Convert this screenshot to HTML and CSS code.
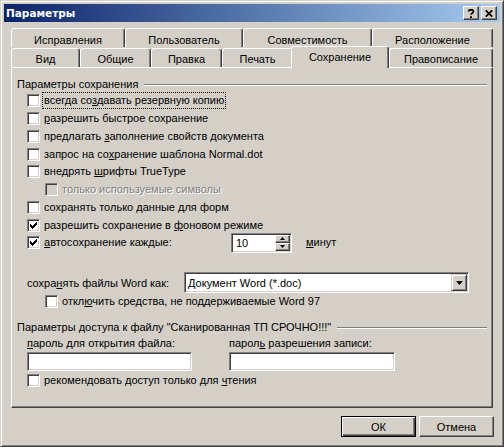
FILE: index.html
```html
<!DOCTYPE html>
<html lang="ru">
<head>
<meta charset="utf-8">
<title>Параметры</title>
<link rel="stylesheet" href="styles.css">
</head>
<body>
<div class="window">
  <div class="titlebar">
    <span class="title">Параметры</span>
    <div class="capbtns">
      <div class="cbtn"><svg width="8" height="9" viewBox="0 0 8 9"><path d="M1.6 2.6 Q1.6 0.8 4 0.8 Q6.4 0.8 6.4 2.5 Q6.4 3.7 4.9 4.3 Q4 4.7 4 5.8" fill="none" stroke="#000" stroke-width="1.8"/><rect x="3.1" y="7.2" width="1.9" height="1.8" fill="#000"/></svg></div>
      <div class="cbtn"><svg width="8" height="7" viewBox="0 0 8 7"><path d="M0.8 0.3 L7.2 6.7 M7.2 0.3 L0.8 6.7" stroke="#000" stroke-width="1.7"/></svg></div>
    </div>
  </div>

  <div class="tabs">
    <div class="tabrow back">
      <div class="tab w114">Исправления</div>
      <div class="tab w118">Пользователь</div>
      <div class="tab w129">Совместимость</div>
      <div class="tab w121">Расположение</div>
    </div>
    <div class="tabrow front">
      <div class="tab w69">Вид</div>
      <div class="tab w71">Общие</div>
      <div class="tab w71">Правка</div>
      <div class="tab w71">Печать</div>
      <div class="tab sel">Сохранение</div>
      <div class="tab w104">Правописание</div>
    </div>
  </div>

  <div class="panel">
    <div class="ghead"><span>Параметры сохранения</span><div class="gline"></div></div>

    <div class="row"><span class="cb"></span><span class="lbl focus">всегда со<u>з</u>давать резервную копию</span></div>
    <div class="row"><span class="cb"></span><span class="lbl"><u>р</u>азрешить быстрое сохранение</span></div>
    <div class="row"><span class="cb"></span><span class="lbl">предлагать <u>з</u>аполнение свойств документа</span></div>
    <div class="row"><span class="cb"></span><span class="lbl">запрос на со<u>х</u>ранение шаблона Normal.dot</span></div>
    <div class="row"><span class="cb"></span><span class="lbl">внедрять <u>ш</u>рифты TrueType</span></div>
    <div class="row sub"><span class="cb dis"></span><span class="lbl distext">только используемые символы</span></div>
    <div class="row"><span class="cb"></span><span class="lbl">сохранять только <u>д</u>анные для форм</span></div>
    <div class="row"><span class="cb"><svg class="chk" width="7" height="7" viewBox="0 0 7 7"><rect x="0" y="2" width="1" height="3"/><rect x="1" y="3" width="1" height="3"/><rect x="2" y="4" width="1" height="3"/><rect x="3" y="3" width="1" height="3"/><rect x="4" y="2" width="1" height="3"/><rect x="5" y="1" width="1" height="3"/><rect x="6" y="0" width="1" height="3"/></svg></span><span class="lbl">разрешить сохранение в <u>ф</u>оновом режиме</span></div>
    <div class="row"><span class="cb"><svg class="chk" width="7" height="7" viewBox="0 0 7 7"><rect x="0" y="2" width="1" height="3"/><rect x="1" y="3" width="1" height="3"/><rect x="2" y="4" width="1" height="3"/><rect x="3" y="3" width="1" height="3"/><rect x="4" y="2" width="1" height="3"/><rect x="5" y="1" width="1" height="3"/><rect x="6" y="0" width="1" height="3"/></svg></span><span class="lbl autolbl"><u>а</u>втосохранение каждые:</span>
      <div class="spin">
        <span class="spinval">10</span>
        <div class="spinbtns">
          <div class="sbtn"><svg width="5" height="3" viewBox="0 0 5 3"><polygon points="0,3 2.5,0 5,3"/></svg></div>
          <div class="sbtn"><svg width="5" height="3" viewBox="0 0 5 3"><polygon points="0,0 5,0 2.5,3"/></svg></div>
        </div>
      </div>
      <span class="minutes"><u>м</u>инут</span>
    </div>

    <div class="comborow">
      <span class="combolbl">сохра<u>н</u>ять файлы Word как:</span>
      <div class="combo">
        <span class="comboval">Документ Word (*.doc)</span>
        <div class="dropbtn"><svg width="7" height="4" viewBox="0 0 7 4"><polygon points="0,0 7,0 3.5,4"/></svg></div>
      </div>
    </div>
    <div class="row sub short"><span class="cb"></span><span class="lbl">откл<u>ю</u>чить средства, не поддерживаемые Word 97</span></div>

    <div class="ghead g2"><span>Параметры доступа к файлу "Сканированная ТП СРОЧНО!!!"</span><div class="gline"></div></div>
    <div class="pwlabels">
      <span class="pwcol"><u>п</u>ароль для открытия файла:</span>
      <span class="pwcol">парол<u>ь</u> разрешения записи:</span>
    </div>
    <div class="pwinputs">
      <div class="field f1"></div>
      <div class="field f2"></div>
    </div>
    <div class="row rec"><span class="cb"></span><span class="lbl">рекомендовать доступ только для <u>ч</u>тения</span></div>
  </div>

  <div class="buttons">
    <div class="btn default">ОК</div>
    <div class="btn">Отмена</div>
  </div>
</div>
</body>
</html>
```

FILE: styles.css
```css
* { box-sizing: border-box; }

body {
  margin: 0;
  background: #D4D0C8;
  font-family: "Liberation Sans", Arial, sans-serif;
  font-size: 11px;
  color: #000;
}

.window {
  width: 504px;
  height: 447px;
  background: #D4D0C8;
  border: 1px solid;
  border-color: #D4D0C8 #404040 #404040 #D4D0C8;
  box-shadow: inset 1px 1px #fff, inset -1px -1px #808080;
  padding: 3px;
  display: flex;
  flex-direction: column;
}

.titlebar {
  height: 18px;
  flex: none;
  background: linear-gradient(to right, #0A246A, #A6CAF0);
  display: flex;
  align-items: center;
  justify-content: space-between;
  padding: 0 3px 0 2px;
}

.title {
  color: #fff;
  font-family: "DejaVu Sans", Verdana, sans-serif;
  font-weight: bold;
  font-size: 10.5px;
  line-height: 13px;
}

.capbtns { display: flex; gap: 2px; }

.cbtn {
  width: 16px;
  height: 14px;
  background: #D4D0C8;
  border: 1px solid;
  border-color: #fff #404040 #404040 #fff;
  box-shadow: inset -1px -1px #808080;
  display: flex;
  align-items: center;
  justify-content: center;
}

.tabs {
  margin: 6px 0 0 7px;
  width: 482px;
  flex: none;
}

.tabrow { display: flex; }
.tabrow.back { height: 19px; }
.tabrow.front { height: 20px; align-items: flex-end; }

.tab {
  height: 19px;
  flex: none;
  background: #D4D0C8;
  border-top: 1px solid #fff;
  border-left: 1px solid #fff;
  border-right: 1px solid #404040;
  border-radius: 3px 3px 0 0;
  box-shadow: inset -1px 0 #808080;
  text-align: center;
  line-height: 13px;
  padding-top: 4px;
}

.tabrow.back .tab { padding-top: 5px; }

.w114 { width: 114px; }
.w118 { width: 118px; }
.w129 { width: 129px; }
.w121 { width: 121px; }
.w69 { width: 69px; }
.w71 { width: 71px; }
.w104 { width: 104px; }

.tab.sel {
  width: 98px;
  height: 22px;
  margin-left: -2px;
  margin-bottom: -1px;
  position: relative;
  z-index: 2;
  padding-top: 4px;
}

.panel {
  margin-left: 7px;
  width: 482px;
  height: 341px;
  flex: none;
  border: 1px solid;
  border-color: #fff #404040 #404040 #fff;
  box-shadow: inset -1px -1px #808080;
  padding: 8px 5px 0 5px;
}

.ghead {
  height: 16px;
  display: flex;
  align-items: center;
  line-height: 13px;
}

.gline {
  flex: 1;
  height: 2px;
  margin-left: 6px;
  margin-top: 1px;
  border-top: 1px solid #808080;
  border-bottom: 1px solid #fff;
}

.g2 { margin-top: 10px; }

.row {
  height: 17.75px;
  display: flex;
  align-items: center;
  padding-left: 10px;
}

.row.sub { padding-left: 28px; }
.row.short { height: 16px; }
.row.rec { height: 18px; }

.cb {
  width: 13px;
  height: 13px;
  flex: none;
  background: #fff;
  border: 1px solid;
  border-color: #808080 #fff #fff #808080;
  box-shadow: inset 1px 1px #404040, inset -1px -1px #D4D0C8;
  margin-right: 2px;
  display: flex;
  align-items: center;
  justify-content: center;
}

.cb.dis { background: #D4D0C8; }

.chk { fill: #000; shape-rendering: crispEdges; }

.lbl {
  line-height: 13px;
  padding: 1px 1px;
  border: 1px solid transparent;
  white-space: nowrap;
}

.lbl.focus { border: 1px dotted #000; }

.distext { color: #808080; text-shadow: 1px 1px #fff; }

.autolbl { width: 189px; flex: none; }

.spin {
  width: 61px;
  height: 20px;
  flex: none;
  display: flex;
  background: #fff;
  border: 1px solid;
  border-color: #808080 #fff #fff #808080;
  box-shadow: inset 1px 1px #404040, inset -1px -1px #D4D0C8;
  padding: 1px 1px 1px 1px;
}

.spinval {
  flex: 1;
  padding-left: 3px;
  line-height: 16px;
}

.spinbtns {
  width: 15px;
  display: flex;
  flex-direction: column;
}

.sbtn {
  height: 8px;
  background: #D4D0C8;
  border: 1px solid;
  border-color: #fff #404040 #404040 #fff;
  box-shadow: inset -1px -1px #808080;
  display: flex;
  align-items: center;
  justify-content: center;
}

.minutes { margin-left: 14px; line-height: 13px; }

.comborow {
  margin-top: 20.25px;
  height: 21px;
  display: flex;
  align-items: center;
  padding-left: 10px;
}

.combolbl { width: 157px; flex: none; }

.combo {
  width: 285px;
  height: 21px;
  display: flex;
  align-items: center;
  background: #fff;
  border: 1px solid;
  border-color: #808080 #fff #fff #808080;
  box-shadow: inset 1px 1px #404040, inset -1px -1px #D4D0C8;
  padding: 1px;
}

.comboval { flex: 1; padding-left: 2px; }

.dropbtn {
  width: 16px;
  height: 17px;
  background: #D4D0C8;
  border: 1px solid;
  border-color: #D4D0C8 #404040 #404040 #D4D0C8;
  box-shadow: inset 1px 1px #fff, inset -1px -1px #808080;
  display: flex;
  align-items: center;
  justify-content: center;
}

.pwlabels {
  height: 16px;
  display: flex;
  align-items: center;
  padding-left: 10px;
}

.pwcol { width: 202px; flex: none; }

.pwinputs {
  margin-top: 1px;
  display: flex;
  padding-left: 10px;
  gap: 37px;
}

.field {
  height: 19px;
  background: #fff;
  border: 1px solid;
  border-color: #808080 #fff #fff #808080;
  box-shadow: inset 1px 1px #404040, inset -1px -1px #D4D0C8;
}

.f1 { width: 165px; }
.f2 { width: 166px; }

.buttons {
  margin-top: 8px;
  display: flex;
  justify-content: flex-end;
  gap: 3px;
  padding-right: 6px;
}

.btn {
  width: 75px;
  height: 21px;
  display: flex;
  align-items: center;
  justify-content: center;
  background: #D4D0C8;
  border: 1px solid;
  border-color: #fff #404040 #404040 #fff;
  box-shadow: inset -1px -1px #808080;
}

.btn.default {
  border: 1px solid #000;
  box-shadow: inset 1px 1px #fff, inset -1px -1px #404040, inset -2px -2px #808080;
}
```
